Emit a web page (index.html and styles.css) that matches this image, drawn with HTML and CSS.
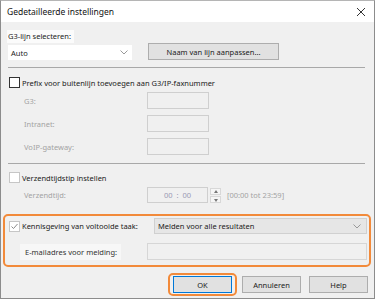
FILE: index.html
```html
<!DOCTYPE html>
<html>
<head>
    <title>Gedetailleerde instellingen</title>
    <link rel="stylesheet" href="styles.css">
</head>
<body>
    <div class="window">
        <div class="titlebar">
            <span class="title">Gedetailleerde instellingen</span>
            <svg class="close" width="10" height="10" viewBox="0 0 10 10">
                <path d="M1 1 L9 9 M9 1 L1 9" stroke="#333" stroke-width="1" fill="none"/>
            </svg>
        </div>

        <div class="content">
            <div class="line-label"><span class="label-bg">G3-lijn selecteren:</span></div>
            <div class="line-row">
                <div class="select white">
                    <span>Auto</span>
                    <svg class="chevron" width="8" height="5" viewBox="0 0 8 5"><polyline points="0.5,0.5 4,4 7.5,0.5" stroke="#999" fill="none"/></svg>
                </div>
                <button class="btn wide">Naam van lijn aanpassen...</button>
            </div>

            <div class="separator first"></div>

            <div class="check-row">
                <span class="checkbox"></span>
                <span>Prefix voor buitenlijn toevoegen aan G3/IP-faxnummer</span>
            </div>
            <div class="field-row first">
                <span class="field-label">G3:</span>
                <span class="field-box"></span>
            </div>
            <div class="field-row">
                <span class="field-label">Intranet:</span>
                <span class="field-box"></span>
            </div>
            <div class="field-row">
                <span class="field-label">VoIP-gateway:</span>
                <span class="field-box"></span>
            </div>

            <div class="separator second"></div>

            <div class="check-row second">
                <span class="checkbox disabled"></span>
                <span>Verzendtijdstip instellen</span>
            </div>
            <div class="time-row">
                <span class="field-label">Verzendtijd:</span>
                <span class="time-box">00&nbsp;&nbsp;:&nbsp;&nbsp;00</span>
                <span class="spinner">
                    <span class="spin up"></span>
                    <span class="spin down"></span>
                </span>
                <span class="range">[00:00 tot 23:59]</span>
            </div>

            <div class="notify">
                <div class="notify-row">
                    <div class="check-label">
                        <span class="checkbox checked">
                            <svg width="9" height="9" viewBox="0 0 9 9"><polyline points="1.5,4.5 3.5,6.5 7.5,2" stroke="#8a8a8a" stroke-width="1" fill="none"/></svg>
                        </span>
                        <span>Kennisgeving van voltooide taak:</span>
                    </div>
                    <div class="select grey">
                        <span>Melden voor alle resultaten</span>
                        <svg class="chevron" width="8" height="5" viewBox="0 0 8 5"><polyline points="0.5,0.5 4,4 7.5,0.5" stroke="#999" fill="none"/></svg>
                    </div>
                </div>
                <div class="notify-row mail">
                    <span class="mail-label">E-mailadres voor melding:</span>
                    <span class="mail-box"></span>
                </div>
            </div>

            <div class="buttons">
                <div class="ok-ring"><button class="btn ok">OK</button></div>
                <button class="btn">Annuleren</button>
                <button class="btn">Help</button>
            </div>
        </div>
    </div>
</body>
</html>
```

FILE: styles.css
```css
body {
    margin: 0;
    font-family: 'Noto Sans', 'Open Sans', sans-serif;
    font-size: 7.5px;
    color: #1a1a1a;
}
.window {
    width: 375px;
    height: 299px;
    box-sizing: border-box;
    border: 1px solid #8c8c8c;
    border-top-color: #b5b5b5;
    background: #f0f0f0;
}
.titlebar {
    height: 21px;
    background: #fff;
    display: flex;
    align-items: center;
    justify-content: space-between;
    padding: 0 8px 0 6px;
}
.title {
    font-size: 8.5px;
    color: #111;
}
.content {
    padding: 0 6px 0 7px;
}
.line-label {
    margin-top: 8px;
    height: 13px;
}
.label-bg {
    display: inline-block;
    height: 13px;
    line-height: 13px;
    background: #fbfbfb;
    padding: 0 3px 0 1px;
    margin-left: -1px;
}
.line-row {
    display: flex;
    align-items: flex-end;
    height: 17px;
}
.select {
    display: flex;
    align-items: center;
    justify-content: space-between;
    box-sizing: border-box;
}
.select.white {
    width: 124px;
    height: 15px;
    background: #fff;
    padding: 0 4px 0 3px;
}
.chevron {
    display: block;
}
.btn {
    font: inherit;
    color: #1a1a1a;
    background: #e1e1e1;
    border: 1px solid #adadad;
    padding: 0;
    height: 17px;
    width: 59px;
    box-sizing: border-box;
}
.btn.wide {
    width: 131px;
    margin-left: 16px;
}
.separator {
    width: 357px;
    height: 1px;
    background: #a8a8a8;
}
.separator.first {
    margin-top: 7px;
}
.separator.second {
    margin-top: 8px;
}
.check-row {
    display: flex;
    align-items: center;
    gap: 2px;
    height: 11px;
    margin-top: 9px;
    margin-left: 1px;
}
.check-row.second {
    margin-top: 8px;
}
.checkbox {
    width: 11px;
    height: 11px;
    box-sizing: border-box;
    border: 1px solid #333;
    background: #fff;
    display: flex;
    align-items: center;
    justify-content: center;
}
.checkbox.disabled,
.checkbox.checked {
    border-color: #c6c6c6;
}
.field-row {
    display: flex;
    align-items: center;
    height: 17px;
    margin-top: 6px;
}
.field-row.first {
    margin-top: 4px;
}
.field-label {
    width: 123px;
    padding-left: 16px;
    color: #a3a3a3;
}
.field-box {
    width: 62px;
    height: 17px;
    box-sizing: border-box;
    border: 1px solid #cfcfcf;
}
.time-row {
    display: flex;
    align-items: center;
    height: 16px;
    margin-top: 4px;
}
.time-box {
    width: 61px;
    height: 16px;
    box-sizing: border-box;
    border: 1px solid #cfcfcf;
    text-align: center;
    line-height: 14px;
    color: #9a9ab4;
}
.spinner {
    display: flex;
    flex-direction: column;
    gap: 1px;
    margin-left: 2px;
}
.spin {
    width: 11px;
    height: 7px;
    background: #f6f6f6;
    border: 1px solid #d8d8d8;
    box-sizing: border-box;
    position: relative;
}
.spin::after {
    content: '';
    position: absolute;
    left: 3px;
    border-left: 2px solid transparent;
    border-right: 2px solid transparent;
}
.spin.up::after {
    top: 1px;
    border-bottom: 3px solid #777;
}
.spin.down::after {
    top: 2px;
    border-top: 3px solid #777;
}
.range {
    margin-left: 6px;
    color: #a3a3a3;
}
.notify {
    margin: 11px -3px 0 -5px;
    height: 53px;
    box-sizing: border-box;
    border: 2px solid #f28a3a;
    border-radius: 5px;
    padding: 2px 2px 0 3px;
}
.notify-row {
    display: flex;
    align-items: center;
    justify-content: space-between;
    height: 16px;
}
.check-label {
    display: flex;
    align-items: center;
    gap: 2px;
    padding-left: 1px;
}
.select.grey {
    width: 213px;
    height: 16px;
    background: #e6e6e6;
    border: 1px solid #d0d0d0;
    padding: 0 5px 0 3px;
}
.notify-row.mail {
    margin-top: 9px;
    height: 17px;
}
.mail-label {
    background: #f7f7f7;
    height: 16px;
    line-height: 16px;
    padding: 0 4px 0 5px;
    margin-left: 12px;
    color: #333;
}
.mail-box {
    width: 220px;
    height: 17px;
    box-sizing: border-box;
    border: 1px solid #d6d6d6;
}
.buttons {
    display: flex;
    justify-content: flex-end;
    align-items: center;
    gap: 8px;
    margin-top: 6px;
}
.ok-ring {
    border: 2px solid #f28a3a;
    border-radius: 5px;
    padding: 1px 3px;
    margin-right: -3px;
}
.btn.ok {
    border: 1px solid #0078d7;
    display: block;
}
```
